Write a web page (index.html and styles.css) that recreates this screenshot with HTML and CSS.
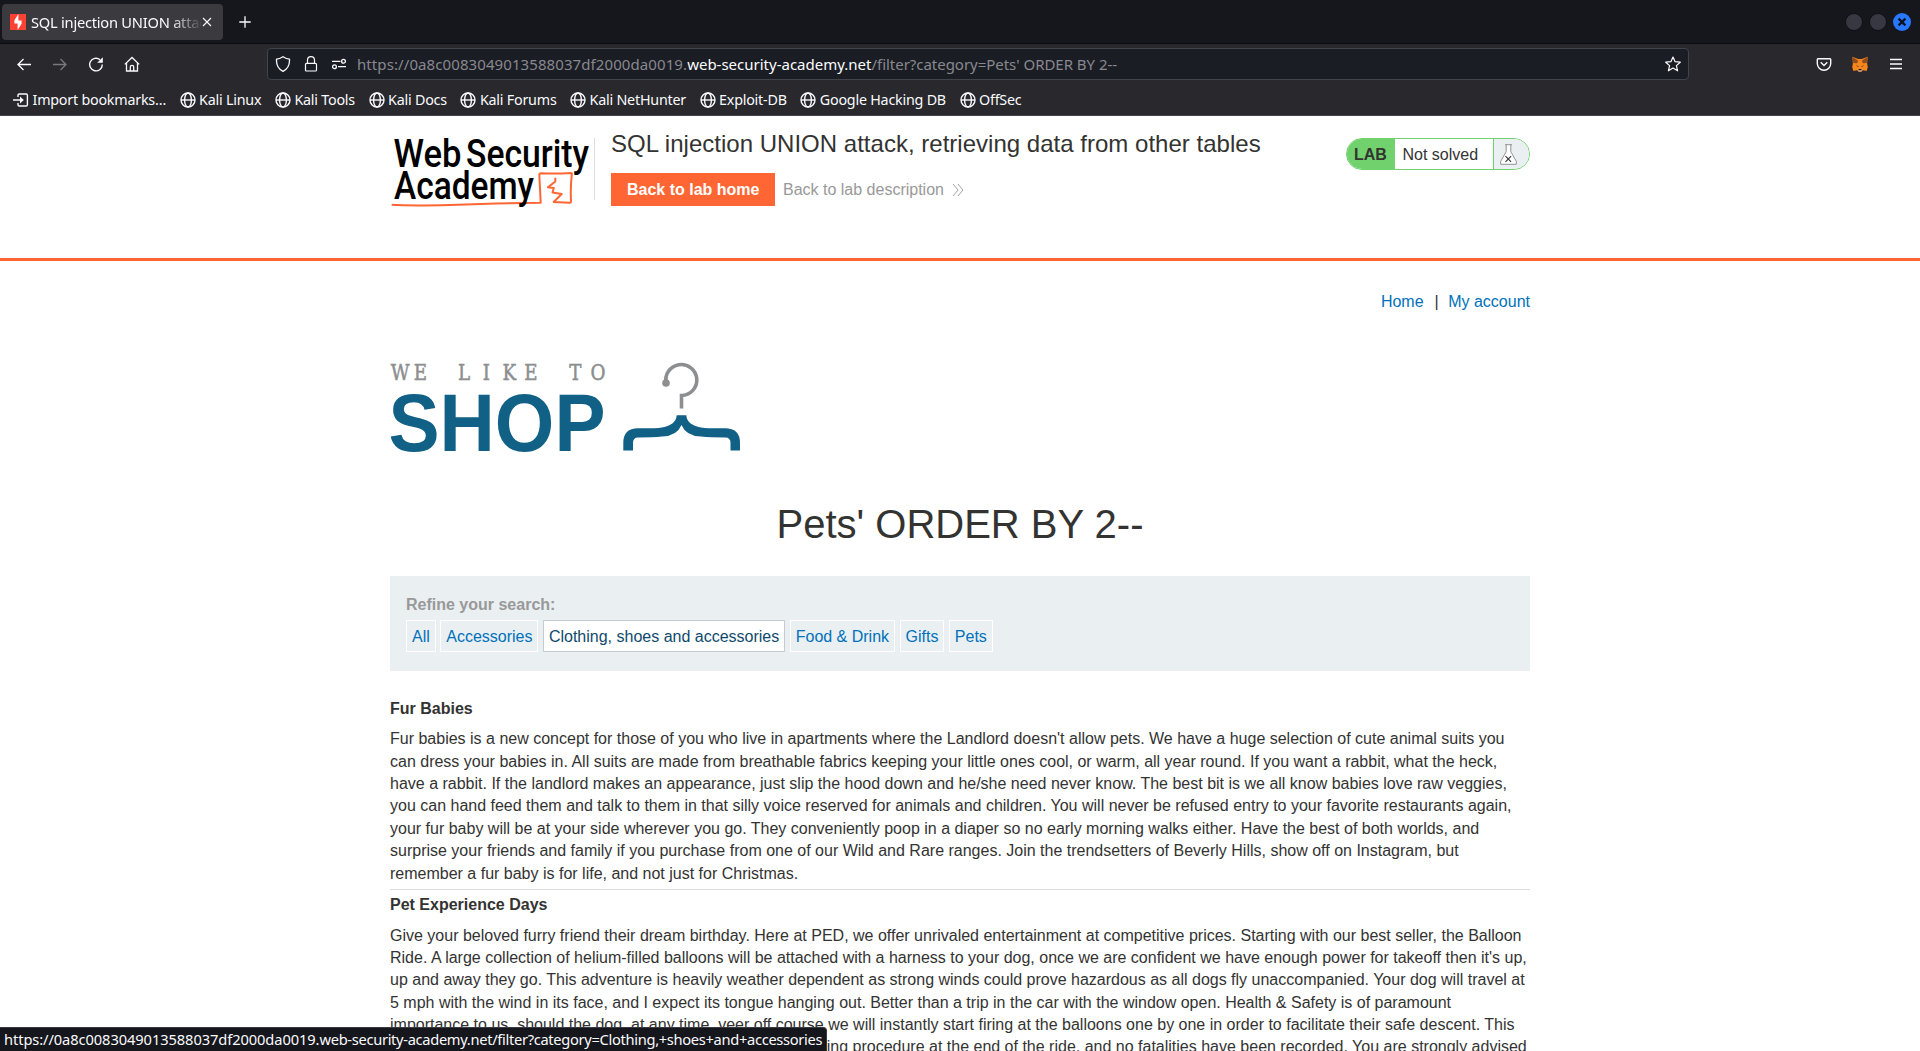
FILE: index.html
```html
<!DOCTYPE html>
<html lang="en">
<head>
<meta charset="utf-8">
<title>SQL injection UNION attack, retrieving data from other tables</title>
<link rel="stylesheet" href="styles.css">
</head>
<body>
<svg class="defs" width="0" height="0" aria-hidden="true">
  <symbol id="globe" viewBox="0 0 16 16"><g fill="none" stroke="#fbfbfe" stroke-width="1.4"><circle cx="8" cy="8" r="7"/><ellipse cx="8" cy="8" rx="3.4" ry="7"/><path d="M1 8h14"/></g></symbol>
</svg>
<div class="browser">
  <div class="tabstrip">
    <div class="tab">
      <svg class="favicon" viewBox="0 0 16 16"><rect width="16" height="16" fill="#ff4133"/><path d="M8.4 0 4.4 6.2v3.2h3.2V16l4-6.3V6.5H8.4z" fill="#fff"/></svg>
      <span class="tab-title">SQL injection UNION attack</span>
      <svg class="tab-close" viewBox="0 0 10 10"><path d="M1 1l8 8M9 1l-8 8" stroke="#fbfbfe" stroke-width="1.1"/></svg>
    </div>
    <svg class="new-tab" viewBox="0 0 12 12"><path d="M6 .3v11.4M.3 6h11.4" stroke="#fbfbfe" stroke-width="1.3"/></svg>
    <div class="window-buttons"><i></i><i></i>
      <svg viewBox="0 0 18 18"><circle cx="9" cy="9" r="9" fill="#2777ff"/><path d="M5.6 5.6l6.8 6.8M12.4 5.6l-6.8 6.8" stroke="#0c1220" stroke-width="2.2"/></svg>
    </div>
  </div>
  <div class="navbar">
    <div class="nav-buttons">
      <svg viewBox="0 0 16 16"><path d="M15 8.5H2M7.5 3 2 8.5 7.5 14" fill="none" stroke="#fbfbfe" stroke-width="1.3"/></svg>
      <svg viewBox="0 0 16 16"><path d="M1 8.5h13M8.5 3 14 8.5 8.5 14" fill="none" stroke="#78787d" stroke-width="1.3"/></svg>
      <svg viewBox="0 0 16 16"><path d="M14.300 8.500A6.300 6.300 0 1 1 12 3.700" fill="none" stroke="#fbfbfe" stroke-width="1.400"/><path d="M14.800 1.200v5.600H9.200z" fill="#fbfbfe"/></svg>
      <svg viewBox="0 0 16 16"><path d="M.8 8.400 8 1.500l7.200 6.900M2.500 7v8h11V7M6.300 15v-4q0-1.700 1.700-1.700T9.700 11v4" fill="none" stroke="#fbfbfe" stroke-width="1.300"/></svg>
    </div>
    <div class="urlbar">
      <svg viewBox="0 0 16 16"><path d="M8 .7Q11.500 3 14.500 3.200 15 12 8 15.400 1 12 1.500 3.200 4.500 3 8 .7z" fill="none" stroke="#fbfbfe" stroke-width="1.300" stroke-linejoin="round"/></svg>
      <svg class="lock" viewBox="0 0 16 16"><path d="M3.600 7.400h8.800q1.100 0 1.100 1.100v5.400q0 1.100-1.100 1.100H3.600q-1.100 0-1.100-1.100V8.500q0-1.100 1.100-1.100zM4.500 7.400V4.100a3.500 3.500 0 0 1 7 0v3.300" fill="none" stroke="#fbfbfe" stroke-width="1.200"/></svg>
      <svg class="perms" viewBox="0 0 16 16"><g fill="none" stroke="#fbfbfe" stroke-width="1.300"><path d="M1 5.300h8.500M7 10.700h8"/><circle cx="12.500" cy="5.300" r="1.900"/><circle cx="3.500" cy="10.700" r="1.900"/></g></svg>
      <span class="url"><span class="host-id">https://0a8c0083049013588037df2000da0019.</span><b>web-security-academy.net</b>/filter?category=Pets' ORDER BY 2--</span>
      <svg class="star" viewBox="0 0 16 16"><path d="M8 1l2.100 4.700 5.200.5-3.900 3.400 1.200 5.200L8 12.100l-4.600 2.700 1.200-5.200L.7 6.200l5.200-.5z" fill="none" stroke="#fbfbfe" stroke-width="1.200" stroke-linejoin="round"/></svg>
    </div>
    <div class="toolbar-icons">
      <svg viewBox="0 0 16 16"><path d="M2 2.700h12q.7 0 .7.800v4a6.700 6.700 0 0 1-13.400 0v-4q0-.8.700-.8z" fill="none" stroke="#fbfbfe" stroke-width="1.400"/><path d="M4.700 6.200 8 9.400l3.300-3.200" fill="none" stroke="#fbfbfe" stroke-width="1.400"/></svg>
      <svg viewBox="0 0 16 16"><path d="M.3.700 6.200 3h3.600L15.700.7l-.6 6.800.7 3.500-1.200 4-3.600-.7L9.300 15.700H6.700L5 14.300l-3.600.7L.2 11l.7-3.500z" fill="#f6851b"/><path d="M.3.700 6.200 4.800 5 7.200 1.300 6.900zM15.700.7 9.800 4.800 11 7.200l3.700-.3z" fill="#8f4a20"/><path d="M3.600 9.200 6.500 10l-.2 1.300zM12.400 9.200 9.500 10l.2 1.300z" fill="#5a4a3c"/><path d="M5.600 13.200h4.800l-1.100 2.300H6.700z" fill="#c9b8ab"/><path d="M6.700 13h2.600l.4 1.200H6.300z" fill="#20140d"/></svg>
      <svg viewBox="0 0 16 16"><path d="M2 3.500h12M2 8h12M2 12.500h12" stroke="#fbfbfe" stroke-width="1.300"/></svg>
    </div>
  </div>
  <div class="bookmarks">
    <span><svg viewBox="0 0 16 16"><path d="M5 5V3.200Q5 2 6.200 2h7Q14.400 2 14.400 3.200v9.600q0 1.200-1.200 1.200h-7Q5 14 5 12.800V11M0 8h8" fill="none" stroke="#fbfbfe" stroke-width="1.400"/><path d="M7 4.500 10.800 8 7 11.500z" fill="#fbfbfe"/></svg>Import bookmarks…</span>
    <span><svg><use href="#globe"/></svg>Kali Linux</span>
    <span><svg><use href="#globe"/></svg>Kali Tools</span>
    <span><svg><use href="#globe"/></svg>Kali Docs</span>
    <span><svg><use href="#globe"/></svg>Kali Forums</span>
    <span><svg><use href="#globe"/></svg>Kali NetHunter</span>
    <span><svg><use href="#globe"/></svg>Exploit-DB</span>
    <span><svg><use href="#globe"/></svg>Google Hacking DB</span>
    <span><svg><use href="#globe"/></svg>OffSec</span>
  </div>
</div>

<header class="lab-header">
  <div class="container lab-row">
    <svg class="wsa-logo" viewBox="0 0 200 72">
      <path d="M1.700 66.800Q20 68 60 67 110 65 150.700 64.700L149.300 36.500q0-1 1.500-1.200 16 .7 30-.3 1.200 0 1 1-1.500 14-.8 27.500 0 1.200-1.200 1.200L163.700 64 171.700 56 162.500 54.500 163.800 50 158 49.300 165.300 43.500V39.700" fill="none" stroke="#ff6633" stroke-width="2" stroke-linejoin="round"/>
      <text x="3.500" y="28.500" textLength="68" lengthAdjust="spacingAndGlyphs">Web</text>
      <text x="76" y="28.500" textLength="123" lengthAdjust="spacingAndGlyphs">Security</text>
      <text x="4" y="61" textLength="140" lengthAdjust="spacingAndGlyphs">Academy</text>
    </svg>
    <div class="lab-title">
      <h2>SQL injection UNION attack, retrieving data from other tables</h2>
      <div class="lab-links"><a class="button">Back to lab home</a><a class="description">Back to lab description<svg viewBox="0 0 12 14"><path d="M1 1l5 6-5 6M6 1l5 6-5 6" fill="none" stroke="#999" stroke-width=".9"/></svg></a></div>
    </div>
    <div class="status"><strong>LAB</strong><span>Not solved</span>
      <i><svg viewBox="0 0 17 21"><path d="M5 .7h7M6.200.7v7L.7 17.300v3h15.600v-3L10.800 7.700v-7" fill="#fff" stroke="#888" stroke-width=".9"/><path d="M5.500 12.200l5.600 5.600M11.100 12.200l-5.600 5.600" stroke="#333" stroke-width="1.100"/></svg></i>
    </div>
  </div>
</header>

<main class="container">
  <nav class="top-links"><a>Home</a><span>|</span><a>My account</a></nav>
  <svg class="shop-logo" viewBox="0 0 352 92">
    <text class="tagline" transform="scale(.85 1)" y="17" x="1 28 50 80 109 132.500 158 185 211 236">WE LIKE TO</text>
    <text class="shop" x="-1.500" y="87.500" textLength="217" lengthAdjust="spacingAndGlyphs">SHOP</text>
    <path d="M276.200 20.500A15.500 15.500 0 1 1 291.500 32.500V45.500" fill="none" stroke="#8c8e8f" stroke-width="3.600"/><circle cx="276" cy="20" r="3.800" fill="#8c8e8f"/>
    <path d="M233.300 87.500V80Q233.300 65.200 248 65.200 263 65.600 272 64.400 286 62 286.700 52.300H296.300Q297 62 311 64.400 320 65.600 335 65.200 350 65.200 350 80v7.500H340.500V80Q340.500 74.500 335.500 74.500 320 74.500 311 73.600 296 73 291.500 62 287 73 272 73.600 263 74.500 248 74.500 243 74.500 243 80v7.500z" fill="#116085"/>
  </svg>
  <h1>Pets' ORDER BY 2--</h1>
  <section class="filters">
    <label>Refine your search:</label>
    <div><a>All</a><a>Accessories</a><a class="hover">Clothing, shoes and accessories</a><a>Food &amp; Drink</a><a>Gifts</a><a>Pets</a></div>
  </section>
  <article>
    <h3>Fur Babies</h3>
    <p>Fur babies is a new concept for those of you who live in apartments where the Landlord doesn't allow pets. We have a huge selection of cute animal suits you<br>can dress your babies in. All suits are made from breathable fabrics keeping your little ones cool, or warm, all year round. If you want a rabbit, what the heck,<br>have a rabbit. If the landlord makes an appearance, just slip the hood down and he/she need never know. The best bit is we all know babies love raw veggies,<br>you can hand feed them and talk to them in that silly voice reserved for animals and children. You will never be refused entry to your favorite restaurants again,<br>your fur baby will be at your side wherever you go. They conveniently poop in a diaper so no early morning walks either. Have the best of both worlds, and<br>surprise your friends and family if you purchase from one of our Wild and Rare ranges. Join the trendsetters of Beverly Hills, show off on Instagram, but<br>remember a fur baby is for life, and not just for Christmas.</p>
  </article>
  <article>
    <h3>Pet Experience Days</h3>
    <p>Give your beloved furry friend their dream birthday. Here at PED, we offer unrivaled entertainment at competitive prices. Starting with our best seller, the Balloon<br>Ride. A large collection of helium-filled balloons will be attached with a harness to your dog, once we are confident we have enough power for takeoff then it's up,<br>up and away they go. This adventure is heavily weather dependent as strong winds could prove hazardous as all dogs fly unaccompanied. Your dog will travel at<br>5 mph with the wind in its face, and I expect its tongue hanging out. Better than a trip in the car with the window open. Health &amp; Safety is of paramount<br>importance to us, should the dog, at any time, veer off course we will instantly start firing at the balloons one by one in order to facilitate their safe descent. This<br>should not be any cause for concern as it is our standard landing procedure at the end of the ride, and no fatalities have been recorded. You are strongly advised</p>
  </article>
</main>
<div class="link-status"><span class="host">https://0a8c0083049013588037df2000da0019.</span><span class="path">web-security-academy.net/filter?category=Clothing,+shoes+and+accessories</span></div>
</body>
</html>
```
FILE: styles.css
```css
* { box-sizing: border-box; }
body { margin: 0; height: 1051px; overflow: hidden; background: #fff; color: #333332; font: 16px/1.4 "Liberation Sans", Arial, sans-serif; }
svg { display: block; flex: none; }
.defs { position: absolute; }
h1, h2, h3, p { margin: 0; }
.container { width: 1140px; margin: 0 auto; }

.browser { height: 116px; background: #28282d; border-bottom: 1px solid #43434c; color: #fbfbfe; font: 14.667px/20px "Noto Sans", sans-serif; }
.tabstrip { height: 44px; display: flex; align-items: center; padding-left: 2px; background: #16171c; border-bottom: 1px solid #0b0c10; }
.tab { width: 221px; height: 36px; display: flex; align-items: center; padding: 0 11px 0 8px; background: #3a3a3f; border-radius: 4px; }
.favicon { width: 16px; height: 16px; }
.tab-title { width: 170px; margin-left: 5px; overflow: hidden; white-space: nowrap; letter-spacing: -.24px; mask-image: linear-gradient(90deg, #000 138px, transparent 172px); }
.tab-close { width: 10px; height: 10px; margin-left: 1px; }
.new-tab { width: 12px; height: 12px; margin-left: 16px; }
.window-buttons { display: flex; gap: 6px; align-items: center; margin: 1px 9px 0 auto; }
.window-buttons i { width: 18px; height: 18px; border-radius: 50%; background: #383843; border: 1px solid #0e0f13; }
.window-buttons svg { width: 18px; height: 18px; }

.navbar { height: 40px; display: flex; align-items: center; padding-left: 16px; }
.navbar svg { width: 16px; height: 16px; }
.nav-buttons { display: flex; gap: 20px; width: 251px; }
.urlbar { width: 1422px; height: 32px; display: flex; align-items: center; padding: 0 7px 0 7px; background: #1b1d25; border: 1px solid #42444c; border-radius: 4px; }
.urlbar .lock { margin-left: 12px; }
.urlbar .perms { margin-left: 12px; }
.url { margin-left: 10px; color: #88888e; font-size: 15px; letter-spacing: -.03px; white-space: pre; }
.host-id { letter-spacing: .09px; }
.url b { font-weight: 400; color: #fbfbfe; letter-spacing: 0; }
.urlbar .star { margin-left: auto; }
.toolbar-icons { display: flex; gap: 20px; margin: 0 16px 0 auto; }

.bookmarks { height: 31px; display: flex; align-items: center; padding-left: 13px; font-size: 14.3px; letter-spacing: -.22px; line-height: 19px; white-space: nowrap; }
.bookmarks span { display: flex; align-items: center; gap: 3.5px; margin-right: 13.6px; }
.bookmarks svg { width: 16px; height: 16px; }

.lab-header { height: 145px; padding-top: 12px; border-bottom: 3px solid #ff6633; }
.lab-row { display: flex; align-items: flex-start; }
.wsa-logo { width: 200px; height: 72px; margin-top: 10px; font: 500 38px Roboto, sans-serif; overflow: visible; }
.lab-title { position: relative; margin-left: 4px; padding-left: 17px; }
.lab-title::before { content: ""; position: absolute; left: 0; top: 10px; width: 1px; height: 62px; background: #ddd; }
.lab-title h2 { height: 45px; font-size: 24px; font-weight: 400; line-height: 31px; letter-spacing: .015px; white-space: nowrap; }
.lab-links { display: flex; align-items: center; }
.button { height: 33px; padding: 0 16px; background: #ff6633; color: #fff; font-weight: 700; line-height: 33px; }
.description { display: flex; align-items: center; margin-left: 7.5px; padding-top: 1px; color: #999; }
.description svg { width: 12px; height: 14px; margin-left: 8px; }
.status { width: 184px; height: 32px; display: flex; margin: 10px 0 0 auto; border: 1px solid #70d16d; border-radius: 16px; overflow: hidden; line-height: 30px; }
.status strong { width: 48px; padding: 1px 0 0 7px; background: #70d16d; }
.status span { flex: 1; padding: 1px 0 0 7.5px; }
.status i { width: 36px; padding: 5px 0 0 6px; background: #eaeff2; border-left: 1px solid #70d16d; }
.status svg { width: 17px; height: 21px; }

.top-links { display: flex; justify-content: flex-end; gap: 10.8px; padding-top: 30px; height: 102px; }
a { color: #0071ba; }
.top-links span { width: 3px; }
.shop-logo { width: 352px; height: 92px; overflow: visible; }
.tagline { font: 21.5px "DejaVu Serif", serif; fill: #8c8e8f; stroke: #8c8e8f; stroke-width: .5px; }
.shop { font: 700 81.5px "Liberation Sans", sans-serif; fill: #116085; }
h1 { height: 121px; padding-top: 41px; font-size: 40px; font-weight: 400; line-height: 56px; text-align: center; }
.filters { height: 95px; padding: 18px 16px 0; background: #eaeff2; }
.filters label { display: block; height: 26px; color: #999; font-weight: 700; }
.filters div { display: flex; gap: 4.45px; }
.filters a { height: 32px; padding: 1px 5px 0; border: 1px solid #fff; line-height: 30px; }
.filters .hover { background: #fff; border-color: #c5ccd0; color: #0f4a6c; }
article { white-space: nowrap; border-bottom: 1px solid #ddd; height: 196px; }
article h3 { height: 34.5px; font-size: 16px; line-height: 22px; padding-top: 4px; }
.filters + article { height: 219px; padding-top: 23px; }
.filters + article h3 { height: 34.3px; }
.link-status { position: fixed; left: 0; bottom: 0; height: 24px; padding: 0 4px; background: #16171c; border-top: 1px solid #3a3b42; border-right: 1px solid #3a3b42; border-radius: 0 4px 0 0; color: #fbfbfe; font: 14.667px/23px "Noto Sans", sans-serif; white-space: nowrap; }
.link-status .host { letter-spacing: -.085px; }
.link-status .path { letter-spacing: -.31px; }
```
